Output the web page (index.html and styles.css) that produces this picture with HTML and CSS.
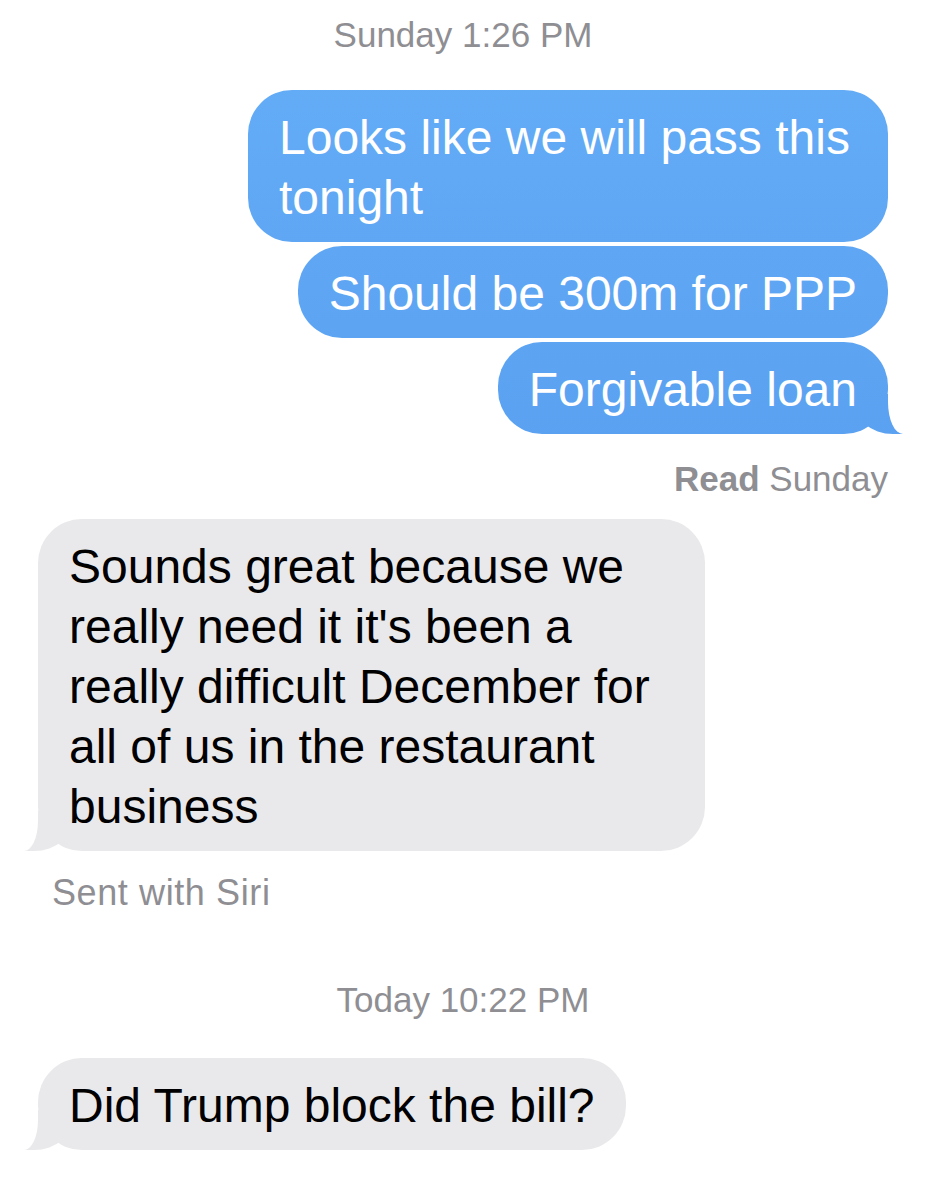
FILE: index.html
```html
<!DOCTYPE html>
<html lang="en">
<head>
<meta charset="utf-8">
<title>Messages</title>
<link rel="stylesheet" href="styles.css">
</head>
<body>
<main class="thread">
  <div class="stamp"><span class="day">Sunday</span> 1:26 PM</div>

  <div class="group group-out">
    <div class="bubble out">Looks like we will pass this tonight</div>
    <div class="bubble out">Should be 300m for PPP</div>
    <div class="bubble out tail-right">Forgivable loan</div>
  </div>
  <div class="receipt"><b>Read</b> Sunday</div>

  <div class="group group-in first-in">
    <div class="bubble in wide tail-left">Sounds great because we really need it it's been a really difficult December for all of us in the restaurant business</div>
  </div>
  <div class="note">Sent with Siri</div>

  <div class="stamp stamp-today"><span class="day">Today</span> 10:22 PM</div>

  <div class="group group-in">
    <div class="bubble in tail-left">Did Trump block the bill?</div>
  </div>
</main>
</body>
</html>
```

FILE: styles.css
```css
html {
  margin: 0;
  padding: 0;
  background: #ffffff;
}

body {
  margin: 0;
  padding: 0;
  font-family: "Liberation Sans", Arial, sans-serif;
  -webkit-font-smoothing: antialiased;
}

.thread {
  display: flex;
  flex-direction: column;
  padding: 15px 39px 0 38px;
}

.stamp {
  align-self: center;
  font-size: 35px;
  line-height: 40px;
  color: #8e8e93;
}

.stamp .day {
  font-weight: 400;
}

.stamp-today {
  margin-top: 67px;
}

.group {
  display: flex;
  flex-direction: column;
  gap: 4px;
}

.group-out {
  align-items: flex-end;
  margin-top: 35px;
}

.group-in {
  align-items: flex-start;
  margin-top: 38px;
}

.group-in.first-in {
  margin-top: 20px;
}

.bubble {
  position: relative;
  box-sizing: border-box;
  padding: 18px 31px 14px;
  font-size: 48px;
  line-height: 60px;
  border-radius: 44px;
}

.out {
  max-width: 640px;
  color: #ffffff;
  background: linear-gradient(180deg, #65aef7 0px, #5aa1f1 450px) fixed;
}

.in {
  max-width: 667px;
  color: #000000;
  background: #e9e9eb;
}

.tail-right::before,
.tail-right::after,
.tail-left::before,
.tail-left::after {
  content: "";
  position: absolute;
  bottom: 0;
  height: 40px;
  z-index: -1;
}

.tail-right::before {
  right: -15px;
  width: 50px;
  background: linear-gradient(180deg, #65aef7 0px, #5aa1f1 450px) fixed;
  border-bottom-left-radius: 40px 34px;
}

.tail-right::after {
  left: 100%;
  width: 30px;
  background: #ffffff;
  border-bottom-left-radius: 15px 32px;
}

.tail-left::before {
  left: -14px;
  width: 50px;
  background: #e9e9eb;
  border-bottom-right-radius: 40px 34px;
}

.tail-left::after {
  right: 100%;
  width: 30px;
  background: #ffffff;
  border-bottom-right-radius: 14px 30px;
}

.receipt {
  align-self: flex-end;
  margin-top: 25px;
  font-size: 35px;
  line-height: 40px;
  color: #8e8e93;
}

.receipt b {
  font-weight: 700;
}

.note {
  margin-top: 22px;
  padding-left: 14px;
  font-size: 36px;
  line-height: 40px;
  letter-spacing: 0.6px;
  color: #8e8e93;
}
```
